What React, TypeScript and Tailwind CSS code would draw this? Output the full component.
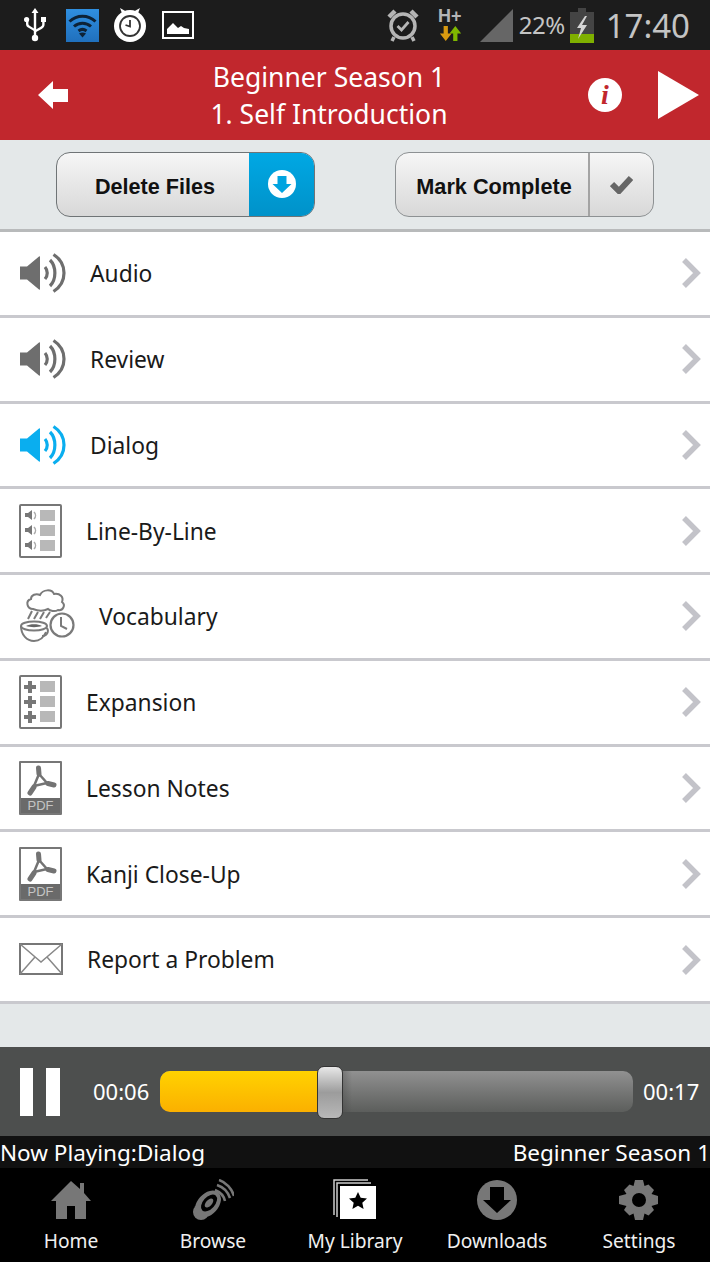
import React from 'react';

const SANS = 'font-["Noto_Sans","Open_Sans",sans-serif]';

function UsbIcon() {
  return (
    <svg width="22" height="34" viewBox="0 0 22 34" fill="#fff">
      <path d="M11 0l3.500 5h-2.300v22h-2.400V5H7.500z" />
      <circle cx="11" cy="30" r="3.200" />
      <circle cx="2.600" cy="11.500" r="2.600" />
      <rect x="17" y="9" width="5" height="5" />
      <path d="M2 13v3c0 2 1 3 3 4l5 3v-2.600l-4-2.400c-1-.6-1.600-1.200-1.600-2.200V13zM18.200 13.500v3c0 1-.6 1.600-1.600 2.200l-5 3v2.600l6-3.400c2-1.200 3-2.400 3-4.400v-3z" />
    </svg>
  );
}

function WifiIcon() {
  return (
    <div className="w-[33px] h-[33px] bg-gradient-to-b from-[#2f8fe0] to-[#2070bd] flex items-center justify-center">
      <svg width="29" height="25" viewBox="0 0 29 25" fill="none" stroke="#0d2236" strokeWidth="3">
        <path d="M1.500 8.500C9 1.500 20 1.500 27.500 8.500" />
        <path d="M6 13.500c5-4.500 12-4.500 17 0" />
        <path d="M10.500 18c2.500-2 5.500-2 8 0" />
        <path d="M14.500 24.500l-3.500-4c2-1.300 5-1.300 7 0z" fill="#0d2236" stroke="none" />
      </svg>
    </div>
  );
}

function TimerIcon() {
  return (
    <svg width="34" height="34" viewBox="0 0 34 34">
      <path d="M7 0l7 4-4 4zM27 0l-7 4 4 4z" fill="#fff" />
      <circle cx="17" cy="18" r="16" fill="#fff" />
      <circle cx="17" cy="18" r="10" fill="none" stroke="#333" strokeWidth="1.800" />
      <path d="M17 12v6.500l-4.500-1.500" fill="none" stroke="#333" strokeWidth="1.800" />
    </svg>
  );
}

function PictureIcon() {
  return (
    <svg width="32" height="28" viewBox="0 0 32 28">
      <rect x="1" y="1" width="30" height="26" fill="#1c1c1c" stroke="#fff" strokeWidth="2" />
      <path d="M5 23v-5l6-6 5 5 3-2 3 2 5 1v5z" fill="#fff" />
    </svg>
  );
}

function AlarmIcon() {
  return (
    <svg width="34" height="34" viewBox="0 0 34 34" fill="none" stroke="#b5b5b5">
      <circle cx="17" cy="18" r="12" strokeWidth="3.500" />
      <path d="M11.500 18l4 4 7-8" strokeWidth="2.800" />
      <path d="M3 9l6-6M31 9l-6-6" strokeWidth="4.500" />
      <path d="M8 29l-2 4M26 29l2 4" strokeWidth="3.500" />
    </svg>
  );
}

function NetworkIcon() {
  return (
    <div className="flex flex-col items-center w-[26px] h-[34px]">
      <span className="font-['Liberation_Sans',sans-serif] font-bold text-[18px] leading-[17px] text-[#b5b5b5]">H+</span>
      <svg width="24" height="17" viewBox="0 0 22 16">
        <path d="M5 1h4v7h3.500L7 15 1.500 8H5z" fill="#d99a10" />
        <path d="M14 15h4V8h3.500L16 1l-5.500 7H14z" fill="#7fb800" />
      </svg>
    </div>
  );
}

function BatteryIcon() {
  return (
    <svg width="24" height="35" viewBox="0 0 24 35">
      <rect x="8" y="0" width="8" height="4" fill="#444" />
      <rect x="0" y="4" width="24" height="22" fill="#444" />
      <rect x="0" y="26" width="24" height="9" fill="#7fb000" />
      <path d="M15 8l-8 12h4l-3 11 9-14h-5l5-9z" fill="#d5d5d5" />
    </svg>
  );
}

function SpeakerIcon({ color }: { color: string }) {
  return (
    <svg width="46" height="40" viewBox="0 0 46 40" fill="none">
      <path d="M0 13.500h7L19 3.500c.6-.5 1-.2 1 .5v32c0 .7-.4 1-1 .5L7 26.500H0z" fill={color} />
      <path d="M25 14c3 3.500 3 8.500 0 12" stroke={color} strokeWidth="3.200" />
      <path d="M30 7c6.500 6.500 6.500 19.500 0 26" stroke={color} strokeWidth="3.200" />
      <path d="M33.500 1.500c14 9 14 28 0 37" stroke={color} strokeWidth="3.200" />
    </svg>
  );
}

function SheetFrame({ children }: { children: React.ReactNode }) {
  return (
    <svg width="43" height="54" viewBox="0 0 43 54">
      <rect x="1" y="1" width="41" height="52" rx="1" fill="#fff" stroke="#777" strokeWidth="2" />
      {children}
    </svg>
  );
}

function LineByLineIcon() {
  return (
    <SheetFrame>
      {[7, 22, 37].map((y) => (
        <g key={y}>
          <path d={`M6 ${y + 2}h3l4-3v10l-4-3H6z`} fill="#777" />
          <path d={`M15 ${y + 1}c2 2 2 5 0 7`} stroke="#aaa" strokeWidth="1.500" fill="none" />
          <rect x="21" y={y - 1} width="15" height="11" fill="#b8b8b8" />
        </g>
      ))}
    </SheetFrame>
  );
}

function ExpansionIcon() {
  return (
    <SheetFrame>
      {[7, 22, 37].map((y) => (
        <g key={y}>
          <path d={`M9 ${y - 1}h4v4h4v4h-4v4H9v-4H5V${y + 3}h4z`} fill="#777" />
          <rect x="21" y={y - 1} width="15" height="11" fill="#b8b8b8" />
        </g>
      ))}
    </SheetFrame>
  );
}

function VocabularyIcon() {
  return (
    <svg width="56" height="56" viewBox="0 0 56 56" fill="none" stroke="#7a7a7a" strokeWidth="2">
      <path d="M14 21c-6 0-8-8-2-10 0-4 5-6 9-4 3-6 12-6 14-1 6-1 10 3 8 8 4 3 1 9-4 8-3 2-8 1-10-1-4 2-10 2-15 0z" />
      <path d="M13 23l-4 8M19 24l-4 7M25 24l-4 7M31 24l-4 6" strokeWidth="2" />
      <ellipse cx="15" cy="38" rx="13" ry="4.500" />
      <path d="M7 38c4-2.500 12-2.500 16 0-4 1.500-12 1.500-16 0z" fill="#666" stroke="none" />
      <path d="M2 38c0 9 6 15 13 15 6 0 10-4 12-9" />
      <path d="M27 40c3 0 3 8-4 8" />
      <circle cx="43" cy="37" r="11.500" fill="#fff" strokeWidth="2.200" />
      <path d="M42 29v9l6 3" />
    </svg>
  );
}

function PdfIcon() {
  return (
    <div className="w-[43px] h-[54px] border-2 border-[#777] rounded-[1px] bg-white flex flex-col">
      <svg width="39" height="35" viewBox="0 0 39 35" fill="none" stroke="#737373" strokeLinecap="round">
        <path d="M17.500 5l.5 6" strokeWidth="5" />
        <path d="M9 30l4-6" strokeWidth="5" />
        <path d="M33 22l-6-1.500" strokeWidth="5" />
        <path d="M18 11l-5 12 13-3z" strokeWidth="2.500" />
      </svg>
      <div className="flex-1 bg-[#6a6a6a] text-[#c4c4c4] font-['Liberation_Sans',sans-serif] text-[13px] leading-[15px] text-center">PDF</div>
    </div>
  );
}

function MailIcon() {
  return (
    <svg width="44" height="33" viewBox="0 0 44 33" fill="none" stroke="#888" strokeWidth="1.500">
      <rect x="1" y="1" width="42" height="30" stroke="#777" strokeWidth="2" />
      <path d="M1 1l21 18L43 1M1 31l15-17M43 31L28 14" />
    </svg>
  );
}

function Chevron() {
  return (
    <svg width="20" height="32" viewBox="0 0 20 32" fill="none" stroke="#c3c3c9" strokeWidth="5.500">
      <path d="M3 3l13 13L3 29" />
    </svg>
  );
}

const rows = [
  { label: 'Audio', icon: <SpeakerIcon color="#6e6e6e" />, pad: 'pl-[20px]' },
  { label: 'Review', icon: <SpeakerIcon color="#6e6e6e" />, pad: 'pl-[20px]' },
  { label: 'Dialog', icon: <SpeakerIcon color="#0aaeef" />, pad: 'pl-[20px]' },
  { label: 'Line-By-Line', icon: <LineByLineIcon />, pad: 'pl-[19px]' },
  { label: 'Vocabulary', icon: <VocabularyIcon />, pad: 'pl-[19px]' },
  { label: 'Expansion', icon: <ExpansionIcon />, pad: 'pl-[19px]' },
  { label: 'Lesson Notes', icon: <PdfIcon />, pad: 'pl-[19px]' },
  { label: 'Kanji Close-Up', icon: <PdfIcon />, pad: 'pl-[19px]' },
  { label: 'Report a Problem', icon: <MailIcon />, pad: 'pl-[19px]' },
];

function HomeIcon() {
  return (
    <svg width="40" height="40" viewBox="0 0 40 40" fill="#777">
      <path d="M20 1l9 8V3h4v10l7 8h-5v18H24V26h-8v13H5V21H0z" />
    </svg>
  );
}

function BrowseIcon() {
  return (
    <svg width="42" height="42" viewBox="0 0 42 42" fill="none" stroke="#777">
      <ellipse cx="16" cy="25" rx="10.500" ry="15.500" transform="rotate(42 16 25)" fill="#777" stroke="none" />
      <circle cx="9" cy="33" r="8" fill="#777" stroke="none" />
      <ellipse cx="17" cy="24" rx="6" ry="10" transform="rotate(42 17 24)" fill="#000" stroke="none" />
      <ellipse cx="17" cy="24" rx="3" ry="5.500" transform="rotate(42 17 24)" fill="#777" stroke="none" />
      <path d="M23 11c5 2 9 6 10 11" strokeWidth="2.500" />
      <path d="M25 6c6 2 11 7 13 13" strokeWidth="2.500" />
      <path d="M27 1c7 2 13 9 15 16" strokeWidth="2.500" />
    </svg>
  );
}

function LibraryIcon() {
  return (
    <svg width="44" height="42" viewBox="0 0 44 42">
      <path d="M1 36V1h34" fill="none" stroke="#ccc" strokeWidth="1.500" />
      <path d="M4 38V4h34" fill="none" stroke="#ccc" strokeWidth="1.500" />
      <rect x="7" y="7" width="36" height="33" fill="#fff" />
      <path d="M25 13l2.700 5.800 6.300.7-4.700 4.200 1.300 6.300-5.600-3.200-5.600 3.200 1.300-6.300-4.700-4.200 6.300-.7z" fill="#000" />
    </svg>
  );
}

function DownloadsIcon() {
  return (
    <svg width="40" height="40" viewBox="0 0 40 40">
      <circle cx="20" cy="20" r="20" fill="#777" />
      <path d="M13 7h14v13h7L20 33 6 20h7z" fill="#000" />
    </svg>
  );
}

function SettingsIcon() {
  return (
    <svg width="40" height="40" viewBox="0 0 40 40">
      <path
        fill="#777"
        fillRule="evenodd"
        d="M16 0h8l1.500 6 4-1.500 5.500 5.500-2.500 4 6.500 2v8l-6.500 2 2.500 4-5.500 5.500-4-2L24 40h-8l-1.500-6.500-4 2L5 30l2.500-4L0 24v-8l7.500-2L5 10l5.500-5.500 4 1.500zM20 13a7 7 0 100 14 7 7 0 000-14z"
      />
    </svg>
  );
}

const tabs = [
  { label: 'Home', icon: <HomeIcon /> },
  { label: 'Browse', icon: <BrowseIcon /> },
  { label: 'My Library', icon: <LibraryIcon /> },
  { label: 'Downloads', icon: <DownloadsIcon /> },
  { label: 'Settings', icon: <SettingsIcon /> },
];

export default function App() {
  return (
    <div className={`w-[710px] h-[1262px] flex flex-col bg-[#e4e8e9] overflow-hidden ${SANS}`}>
      {/* status bar */}
      <div className="h-[50px] shrink-0 bg-[#1c1c1c] flex items-center justify-between pl-[24px] pr-[20px]">
        <div className="flex items-center">
          <UsbIcon />
          <div className="ml-[20px]"><WifiIcon /></div>
          <div className="ml-[14px]"><TimerIcon /></div>
          <div className="ml-[15px]"><PictureIcon /></div>
        </div>
        <div className="flex items-center">
          <AlarmIcon />
          <div className="ml-[17px]"><NetworkIcon /></div>
          <svg className="ml-[17px]" width="33" height="33" viewBox="0 0 33 33">
            <path d="M0 33L33 0v33z" fill="#666" />
          </svg>
          <span className="ml-[6px] text-[24px] text-[#c4c4c4] tracking-[-0.5px]">22%</span>
          <div className="ml-[5px]"><BatteryIcon /></div>
          <span className="ml-[12px] text-[33px] leading-none text-[#c4c4c4]">17:40</span>
        </div>
      </div>

      {/* title */}
      <div className="h-[90px] shrink-0 bg-[#c1272d] flex items-center text-white">
        <div className="w-[130px] pl-[38px]">
          <svg width="30" height="28" viewBox="0 0 30 28" fill="#fff">
            <path d="M0 14L15 0v8h15v13H15v7z" />
          </svg>
        </div>
        <div className="flex-1 text-center pt-[2px] text-[26.500px] leading-[37px]">
          <div>Beginner Season 1</div>
          <div>1. Self Introduction</div>
        </div>
        <div className="w-[182px] flex items-center justify-end pr-[11px]">
          <div className="w-[34px] h-[34px] rounded-full bg-white flex items-center justify-center text-[#c1272d] font-['Liberation_Serif',serif] font-bold italic text-[28px] leading-none">i</div>
          <svg className="ml-[36px]" width="41" height="48" viewBox="0 0 41 48" fill="#fff">
            <path d="M0 0l41 24L0 48z" />
          </svg>
        </div>
      </div>

      {/* buttons */}
      <div className="h-[90px] shrink-0 flex items-center justify-between px-[56px] pb-[2px] font-['Liberation_Sans',sans-serif]">
        <div className="w-[259px] h-[65px] rounded-[14px] border border-[#6f7476] flex overflow-hidden bg-gradient-to-b from-[#f6f6f6] to-[#d8d8d8]">
          <div className="flex-1 flex items-center justify-center pt-[6px] pl-[4px] font-bold text-[21.600px] text-[#111]">Delete Files</div>
          <div className="w-[65px] bg-gradient-to-b from-[#00a8e4] to-[#0092c9] flex items-center justify-center">
            <svg width="28" height="28" viewBox="0 0 28 28">
              <circle cx="14" cy="14" r="14" fill="#fff" />
              <path d="M9.500 6h9v8h5L14 23 4.500 14h5z" fill="#00a4e0" />
            </svg>
          </div>
        </div>
        <div className="w-[259px] h-[65px] rounded-[14px] border border-[#8d9193] flex overflow-hidden bg-gradient-to-b from-[#f6f6f6] to-[#d8d8d8]">
          <div className="w-[194px] flex items-center justify-center pt-[6px] pl-[4px] font-bold text-[21.700px] text-[#111] border-r-2 border-[#a3a3a3]">Mark Complete</div>
          <div className="flex-1 flex items-center justify-center">
            <svg width="23" height="19" viewBox="0 0 23 19" fill="none" stroke="#666" strokeWidth="6">
              <path d="M2 9l7 7L21 3" />
            </svg>
          </div>
        </div>
      </div>

      {/* list */}
      <div className="border-t-[3px] border-[#b8babb] -mt-[1px]">
        {rows.map((row) => (
          <div key={row.label} className="h-[85.780px] bg-white border-b-[3px] border-[#c9c9ce] flex items-center pr-[9px]">
            <div className={`flex items-center flex-1 ${row.pad}`}>
              {row.icon}
              <span className="ml-[24px] pt-[2px] text-[22.800px] text-[#1a1a1a]">{row.label}</span>
            </div>
            <Chevron />
          </div>
        ))}
      </div>

      <div className="flex-1" />

      {/* player */}
      <div className="h-[89px] shrink-0 bg-[#4d4f4e] flex items-center">
        <div className="flex ml-[20px] gap-[13px]">
          <div className="w-[13px] h-[48px] bg-white" />
          <div className="w-[14px] h-[48px] bg-white" />
        </div>
        <span className="ml-[33px] w-[67px] text-[22px] text-white">00:06</span>
        <div className="relative w-[473px] h-[41px]">
          <div className="w-full h-full rounded-[10px] flex overflow-hidden bg-gradient-to-b from-[#919191] to-[#5c5e5c]">
            <div className="w-[160px] h-full bg-gradient-to-b from-[#ffd200] to-[#fbb000]" />
            <div className="w-[32px] h-full bg-gradient-to-r from-[#3a3a3a] to-transparent" />
          </div>
          <div className="absolute left-[157px] top-[-5px] w-[26px] h-[53px] rounded-[7px] border border-[#333] bg-gradient-to-b from-[#e8e8e8] via-[#9c9c9c] to-[#b8b8b8]" />
        </div>
        <span className="ml-[10px] text-[22px] text-white">00:17</span>
      </div>

      {/* now playing */}
      <div className="h-[32px] shrink-0 bg-[#111] flex items-center justify-between pt-[1px] text-[22.500px] text-white">
        <span>Now Playing:Dialog</span>
        <span>Beginner Season 1</span>
      </div>

      {/* tabs */}
      <div className="h-[94px] shrink-0 bg-black grid grid-cols-5">
        {tabs.map((tab) => (
          <div key={tab.label} className="flex flex-col items-center pt-[11px]">
            <div className="h-[42px] flex items-center justify-center">{tab.icon}</div>
            <span className="mt-[7px] text-[19.200px] leading-[26px] text-[#f0f0f0]">{tab.label}</span>
          </div>
        ))}
      </div>
    </div>
  );
}
